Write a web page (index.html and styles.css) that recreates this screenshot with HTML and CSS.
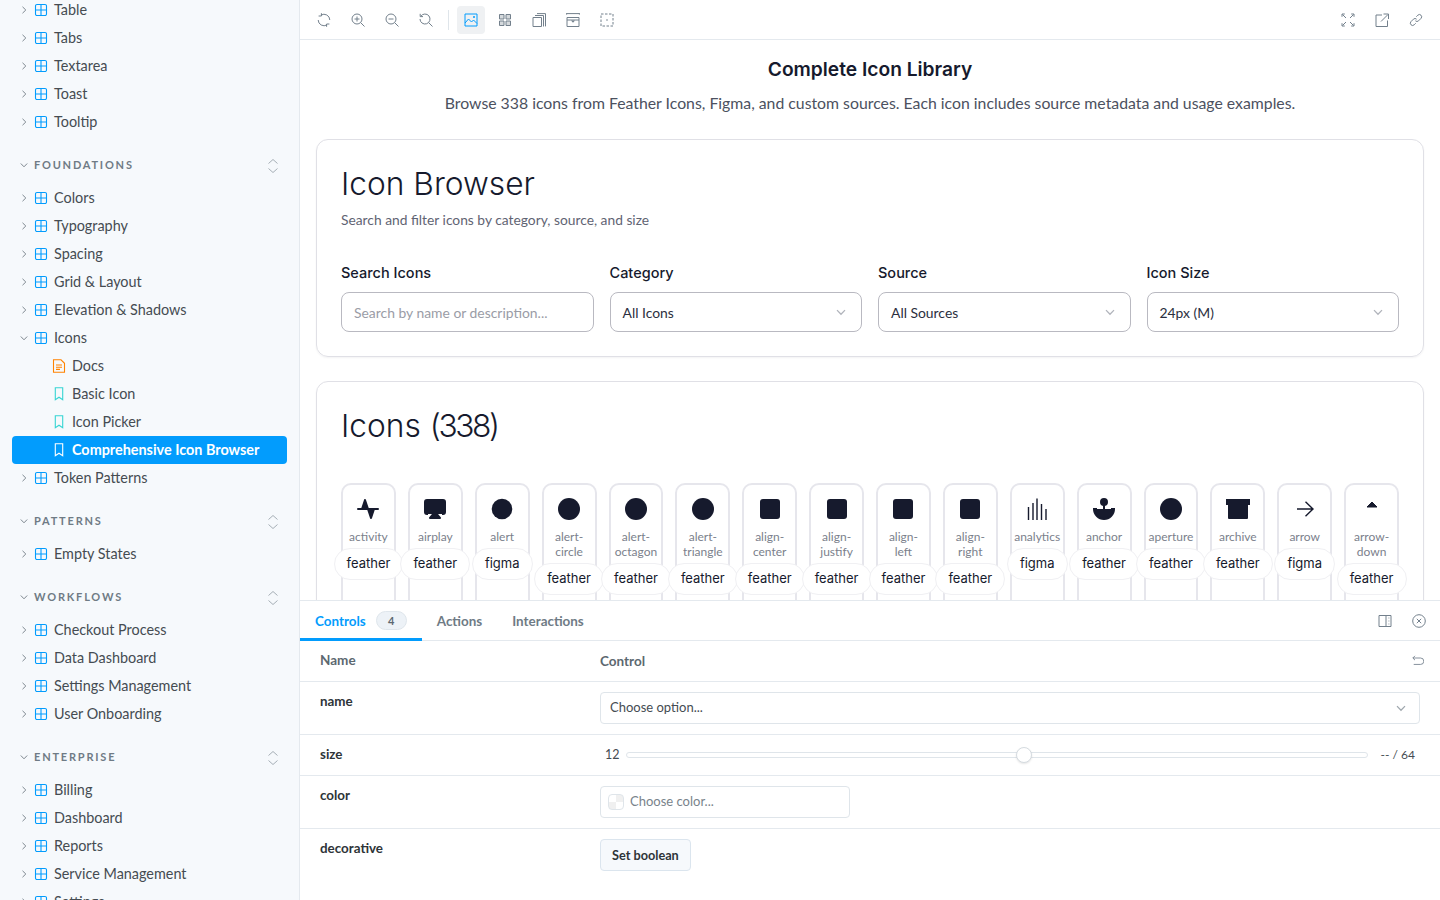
FILE: index.html
```html
<!doctype html>
<html>
  <head>
    <title>Icon Browser</title>
    <link rel="stylesheet" href="styles.css">
  </head>

  <body>
    <!-- Shared icons -->
    <svg class="sprite" xmlns="http://www.w3.org/2000/svg">
      <symbol id="chev-r" viewBox="0 0 8 8"><path d="M2.5 .8 5.8 4 2.5 7.2" fill="none" stroke="currentColor" stroke-width="1"/></symbol>
      <symbol id="chev-d" viewBox="0 0 8 8"><path d="M.8 2.5 4 5.8 7.2 2.5" fill="none" stroke="currentColor" stroke-width="1"/></symbol>
      <symbol id="comp" viewBox="0 0 14 14"><path d="M3 1.5h8A1.5 1.5 0 0 1 12.5 3v8a1.5 1.5 0 0 1-1.5 1.5H3A1.5 1.5 0 0 1 1.500 11V3A1.500 1.500 0 0 1 3 1.500ZM7 1.500v11M1.500 7h11" fill="none" stroke="currentColor" stroke-width="1.100"/></symbol>
      <symbol id="doc" viewBox="0 0 14 14"><path d="M1.500 .8h7.500l3.500 3.500v9h-11ZM4 6h6M4 8.200h6M4 10.400h4" fill="none" stroke="currentColor" stroke-width="1.100"/></symbol>
      <symbol id="mark" viewBox="0 0 14 14"><path d="M3.300 .8h7.400v12L7 10.200 3.300 12.800Z" fill="none" stroke="currentColor" stroke-width="1.100"/></symbol>
      <symbol id="updown" viewBox="0 0 12 16"><path d="M1.500 5.500 6 1.500l4.500 4M1.500 10.500l4.500 4 4.500-4" fill="none" stroke="currentColor" stroke-width="1"/></symbol>
      <symbol id="sync" viewBox="0 0 14 14"><path d="M12.800 7A5.800 5.800 0 0 0 4 2.100M1.200 7A5.800 5.800 0 0 0 10 11.900M4.400 .2v2.800H1.600M9.600 13.800v-2.800h2.800" fill="none" stroke="currentColor" stroke-width="1"/></symbol>
      <symbol id="zoomin" viewBox="0 0 14 14"><circle cx="6" cy="6" r="5" fill="none" stroke="currentColor"/><path d="M9.700 9.700 13.500 13.500M3.500 6h5M6 3.500v5" fill="none" stroke="currentColor"/></symbol>
      <symbol id="zoomout" viewBox="0 0 14 14"><circle cx="6" cy="6" r="5" fill="none" stroke="currentColor"/><path d="M9.700 9.700 13.500 13.500M3.500 6h5" fill="none" stroke="currentColor"/></symbol>
      <symbol id="zoomreset" viewBox="0 0 14 14"><path d="M1.800 3.300A5 5 0 1 1 1 6M1.200 .8v2.800h2.800M9.700 9.700 13.500 13.500" fill="none" stroke="currentColor"/></symbol>
      <symbol id="photo" viewBox="0 0 14 14"><path d="M1 1h12v12H1ZM1 10l3.500-4 3 3 2-2 3.500 3.500" fill="none" stroke="currentColor"/><circle cx="10" cy="4" r="1" fill="currentColor"/></symbol>
      <symbol id="grid" viewBox="0 0 14 14"><path d="M1.500 1.500h4.500v4.500H1.500ZM8 1.500h4.500v4.500H8ZM1.500 8h4.500v4.500H1.500ZM8 8h4.500v4.500H8Z" fill="currentColor" fill-opacity=".3" stroke="currentColor"/></symbol>
      <symbol id="layers" viewBox="0 0 14 14"><path d="M1 4.500h8.500v9H1ZM3 2.500h8.500v11M5 .6h8.500v12.800" fill="none" stroke="currentColor"/></symbol>
      <symbol id="ruler" viewBox="0 0 14 14"><path d="M.6 .6h12.800M.6 .1v1.500M13.400 .1v1.500M1 4.500h12v9H1ZM1 7h12" fill="none" stroke="currentColor"/><path d="M5 7.500h4L7 9.800Z" fill="currentColor"/></symbol>
      <symbol id="outline" viewBox="0 0 14 14"><path d="M1 1h12v12H1Z" fill="none" stroke="currentColor" stroke-dasharray="2.500 1.500"/><circle cx="7" cy="7" r=".8" fill="currentColor"/></symbol>
      <symbol id="expand" viewBox="0 0 14 14"><path d="M1 3.800V1h2.800M13 3.800V1h-2.800M1 10.200V13h2.800M13 10.200V13h-2.800M1.500 1.500l3.500 3.500M12.500 1.500 9 5M1.500 12.500 5 9M12.500 12.500 9 9" fill="none" stroke="currentColor"/></symbol>
      <symbol id="share" viewBox="0 0 14 14"><path d="M7 2H1v11.500h11.500V7.500M6 8.500 13 1.500M8.500 1h5v5" fill="none" stroke="currentColor"/></symbol>
      <symbol id="link" viewBox="0 0 14 14"><path d="M7.300 3.700 8.800 2.200a2.300 2.300 0 0 1 3.200 0 2.300 2.300 0 0 1 0 3.200L9.600 7.800a2.300 2.300 0 0 1-3.200 0M6.700 10.300 5.200 11.800a2.300 2.300 0 0 1-3.200 0 2.300 2.300 0 0 1 0-3.200L4.400 6.200a2.300 2.300 0 0 1 3.200 0" fill="none" stroke="currentColor"/></symbol>
      <symbol id="side" viewBox="0 0 14 14"><path d="M1 1.500h12v11H1ZM8 1.500v11M10.500 4h.800M10.500 7h.800M10.500 10h.800" fill="none" stroke="currentColor"/></symbol>
      <symbol id="close" viewBox="0 0 14 14"><circle cx="7" cy="7" r="6.300" fill="none" stroke="currentColor"/><path d="M4.800 4.800l4.400 4.400M9.200 4.800 4.800 9.200" fill="none" stroke="currentColor"/></symbol>
      <symbol id="undo" viewBox="0 0 14 14"><path d="M3.500 1 1 3.500 3.500 6M1 3.500h9a3 3 0 0 1 0 7.500H2" fill="none" stroke="currentColor"/></symbol>

      <symbol id="i-activity" viewBox="0 0 24 24"><polygon points="22,12 18,12 15,21 9,3 6,12 2,12" fill="currentColor" stroke="currentColor" stroke-width="2" stroke-linejoin="round"/></symbol>
      <symbol id="i-airplay" viewBox="0 0 24 24"><path d="M5 17H4a2 2 0 0 1-2-2V5a2 2 0 0 1 2-2h16a2 2 0 0 1 2 2v10a2 2 0 0 1-2 2h-1" fill="currentColor" stroke="currentColor" stroke-width="2"/><polygon points="12,15 17,21 7,21" fill="currentColor" stroke="currentColor" stroke-width="2" stroke-linejoin="round"/></symbol>
      <symbol id="i-circle" viewBox="0 0 24 24"><circle cx="12" cy="12" r="11" fill="currentColor"/></symbol>
      <symbol id="i-dot" viewBox="0 0 24 24"><circle cx="12" cy="12" r="10.300" fill="currentColor"/></symbol>
      <symbol id="i-square" viewBox="0 0 24 24"><rect x="2" y="2" width="20" height="20" rx="3" fill="currentColor"/></symbol>
      <symbol id="i-bars" viewBox="0 0 24 24"><path d="M3.500 23V10M8 23V6M12 23V1.500M16.500 23V7M21 23V12" fill="none" stroke="currentColor" stroke-width="1.400"/></symbol>
      <symbol id="i-anchor" viewBox="0 0 24 24"><circle cx="12" cy="5" r="3" fill="currentColor" stroke="currentColor" stroke-width="2"/><path d="M12 8v14" stroke="currentColor" stroke-width="2"/><path d="M5 12H2a10 10 0 0 0 20 0h-3" fill="currentColor" stroke="currentColor" stroke-width="2"/></symbol>
      <symbol id="i-archive" viewBox="0 0 24 24"><polygon points="21,8 21,21 3,21 3,8" fill="currentColor" stroke="currentColor" stroke-width="2" stroke-linejoin="round"/><rect x="0" y="2" width="24" height="6" fill="currentColor"/></symbol>
      <symbol id="i-arrow" viewBox="0 0 24 24"><path d="M4 12h15M12.500 4.800 20 12l-7.500 7.200" fill="none" stroke="currentColor" stroke-width="1.400"/></symbol>
      <symbol id="i-caret" viewBox="0 0 24 24"><polygon points="12,5 17,10 7,10" fill="currentColor" stroke="currentColor" stroke-width="1" stroke-linejoin="round"/></symbol>
    </svg>

    <div class="page">
      <!-- Sidebar -->
      <nav class="sidebar">
        <ul class="tree tree-first">
          <li class="row"><svg class="chev"><use href="#chev-r"/></svg><svg class="tree-icon"><use href="#comp"/></svg>Table</li>
          <li class="row"><svg class="chev"><use href="#chev-r"/></svg><svg class="tree-icon"><use href="#comp"/></svg>Tabs</li>
          <li class="row"><svg class="chev"><use href="#chev-r"/></svg><svg class="tree-icon"><use href="#comp"/></svg>Textarea</li>
          <li class="row"><svg class="chev"><use href="#chev-r"/></svg><svg class="tree-icon"><use href="#comp"/></svg>Toast</li>
          <li class="row"><svg class="chev"><use href="#chev-r"/></svg><svg class="tree-icon"><use href="#comp"/></svg>Tooltip</li>
        </ul>

        <div class="group"><svg class="chev"><use href="#chev-d"/></svg><span class="group-name">Foundations</span><svg class="updown"><use href="#updown"/></svg></div>
        <ul class="tree">
          <li class="row"><svg class="chev"><use href="#chev-r"/></svg><svg class="tree-icon"><use href="#comp"/></svg>Colors</li>
          <li class="row"><svg class="chev"><use href="#chev-r"/></svg><svg class="tree-icon"><use href="#comp"/></svg>Typography</li>
          <li class="row"><svg class="chev"><use href="#chev-r"/></svg><svg class="tree-icon"><use href="#comp"/></svg>Spacing</li>
          <li class="row"><svg class="chev"><use href="#chev-r"/></svg><svg class="tree-icon"><use href="#comp"/></svg>Grid &amp; Layout</li>
          <li class="row"><svg class="chev"><use href="#chev-r"/></svg><svg class="tree-icon"><use href="#comp"/></svg>Elevation &amp; Shadows</li>
          <li class="row"><svg class="chev"><use href="#chev-d"/></svg><svg class="tree-icon"><use href="#comp"/></svg>Icons</li>
          <li class="row child"><svg class="tree-icon doc"><use href="#doc"/></svg>Docs</li>
          <li class="row child"><svg class="tree-icon story"><use href="#mark"/></svg>Basic Icon</li>
          <li class="row child"><svg class="tree-icon story"><use href="#mark"/></svg>Icon Picker</li>
          <li class="row child selected"><svg class="tree-icon"><use href="#mark"/></svg>Comprehensive Icon Browser</li>
          <li class="row"><svg class="chev"><use href="#chev-r"/></svg><svg class="tree-icon"><use href="#comp"/></svg>Token Patterns</li>
        </ul>

        <div class="group"><svg class="chev"><use href="#chev-d"/></svg><span class="group-name">Patterns</span><svg class="updown"><use href="#updown"/></svg></div>
        <ul class="tree">
          <li class="row"><svg class="chev"><use href="#chev-r"/></svg><svg class="tree-icon"><use href="#comp"/></svg>Empty States</li>
        </ul>

        <div class="group"><svg class="chev"><use href="#chev-d"/></svg><span class="group-name">Workflows</span><svg class="updown"><use href="#updown"/></svg></div>
        <ul class="tree">
          <li class="row"><svg class="chev"><use href="#chev-r"/></svg><svg class="tree-icon"><use href="#comp"/></svg>Checkout Process</li>
          <li class="row"><svg class="chev"><use href="#chev-r"/></svg><svg class="tree-icon"><use href="#comp"/></svg>Data Dashboard</li>
          <li class="row"><svg class="chev"><use href="#chev-r"/></svg><svg class="tree-icon"><use href="#comp"/></svg>Settings Management</li>
          <li class="row"><svg class="chev"><use href="#chev-r"/></svg><svg class="tree-icon"><use href="#comp"/></svg>User Onboarding</li>
        </ul>

        <div class="group"><svg class="chev"><use href="#chev-d"/></svg><span class="group-name">Enterprise</span><svg class="updown"><use href="#updown"/></svg></div>
        <ul class="tree">
          <li class="row"><svg class="chev"><use href="#chev-r"/></svg><svg class="tree-icon"><use href="#comp"/></svg>Billing</li>
          <li class="row"><svg class="chev"><use href="#chev-r"/></svg><svg class="tree-icon"><use href="#comp"/></svg>Dashboard</li>
          <li class="row"><svg class="chev"><use href="#chev-r"/></svg><svg class="tree-icon"><use href="#comp"/></svg>Reports</li>
          <li class="row"><svg class="chev"><use href="#chev-r"/></svg><svg class="tree-icon"><use href="#comp"/></svg>Service Management</li>
          <li class="row"><svg class="chev"><use href="#chev-r"/></svg><svg class="tree-icon"><use href="#comp"/></svg>Settings</li>
        </ul>
      </nav>

      <main class="main">
        <!-- Toolbar -->
        <header class="toolbar">
          <button class="tool"><svg><use href="#sync"/></svg></button>
          <button class="tool"><svg><use href="#zoomin"/></svg></button>
          <button class="tool"><svg><use href="#zoomout"/></svg></button>
          <button class="tool"><svg><use href="#zoomreset"/></svg></button>
          <span class="tool-sep"></span>
          <button class="tool active"><svg><use href="#photo"/></svg></button>
          <button class="tool"><svg><use href="#grid"/></svg></button>
          <button class="tool"><svg><use href="#layers"/></svg></button>
          <button class="tool"><svg><use href="#ruler"/></svg></button>
          <button class="tool"><svg><use href="#outline"/></svg></button>
          <span class="tool-space"></span>
          <button class="tool"><svg><use href="#expand"/></svg></button>
          <button class="tool"><svg><use href="#share"/></svg></button>
          <button class="tool"><svg><use href="#link"/></svg></button>
        </header>

        <!-- Story canvas -->
        <div class="canvas">
          <h1 class="page-title">Complete Icon Library</h1>
          <p class="page-desc">Browse 338 icons from Feather Icons, Figma, and custom sources. Each icon includes source metadata and usage examples.</p>

          <section class="card">
            <h2 class="card-title">Icon Browser</h2>
            <p class="card-sub">Search and filter icons by category, source, and size</p>
            <div class="filters">
              <div class="field">
                <label class="field-label">Search Icons</label>
                <input class="field-box" type="text" placeholder="Search by name or description...">
              </div>
              <div class="field">
                <label class="field-label">Category</label>
                <div class="field-box">All Icons<svg class="field-chev"><use href="#chev-d"/></svg></div>
              </div>
              <div class="field">
                <label class="field-label">Source</label>
                <div class="field-box">All Sources<svg class="field-chev"><use href="#chev-d"/></svg></div>
              </div>
              <div class="field">
                <label class="field-label">Icon Size</label>
                <div class="field-box">24px (M)<svg class="field-chev"><use href="#chev-d"/></svg></div>
              </div>
            </div>
          </section>

          <section class="card">
            <h2 class="card-title">Icons <span class="card-count">(338)</span></h2>
            <div class="icon-grid">
              <div class="icon-item"><svg class="glyph"><use href="#i-activity"/></svg><span class="icon-name">activity</span><span class="source">feather</span></div>
              <div class="icon-item"><svg class="glyph"><use href="#i-airplay"/></svg><span class="icon-name">airplay</span><span class="source">feather</span></div>
              <div class="icon-item"><svg class="glyph"><use href="#i-dot"/></svg><span class="icon-name">alert</span><span class="source">figma</span></div>
              <div class="icon-item"><svg class="glyph"><use href="#i-circle"/></svg><span class="icon-name">alert-circle</span><span class="source">feather</span></div>
              <div class="icon-item"><svg class="glyph"><use href="#i-circle"/></svg><span class="icon-name">alert-octagon</span><span class="source">feather</span></div>
              <div class="icon-item"><svg class="glyph"><use href="#i-circle"/></svg><span class="icon-name">alert-triangle</span><span class="source">feather</span></div>
              <div class="icon-item"><svg class="glyph"><use href="#i-square"/></svg><span class="icon-name">align-center</span><span class="source">feather</span></div>
              <div class="icon-item"><svg class="glyph"><use href="#i-square"/></svg><span class="icon-name">align-justify</span><span class="source">feather</span></div>
              <div class="icon-item"><svg class="glyph"><use href="#i-square"/></svg><span class="icon-name">align-left</span><span class="source">feather</span></div>
              <div class="icon-item"><svg class="glyph"><use href="#i-square"/></svg><span class="icon-name">align-right</span><span class="source">feather</span></div>
              <div class="icon-item"><svg class="glyph"><use href="#i-bars"/></svg><span class="icon-name">analytics</span><span class="source">figma</span></div>
              <div class="icon-item"><svg class="glyph"><use href="#i-anchor"/></svg><span class="icon-name">anchor</span><span class="source">feather</span></div>
              <div class="icon-item"><svg class="glyph"><use href="#i-circle"/></svg><span class="icon-name">aperture</span><span class="source">feather</span></div>
              <div class="icon-item"><svg class="glyph"><use href="#i-archive"/></svg><span class="icon-name">archive</span><span class="source">feather</span></div>
              <div class="icon-item"><svg class="glyph"><use href="#i-arrow"/></svg><span class="icon-name">arrow</span><span class="source">figma</span></div>
              <div class="icon-item"><svg class="glyph"><use href="#i-caret"/></svg><span class="icon-name">arrow-down</span><span class="source">feather</span></div>
            </div>
          </section>
        </div>

        <!-- Addons panel -->
        <div class="panel">
          <div class="tabs">
            <a class="tab current">Controls<span class="tab-count">4</span></a>
            <a class="tab">Actions</a>
            <a class="tab">Interactions</a>
            <span class="tool-space"></span>
            <svg class="panel-icon"><use href="#side"/></svg>
            <svg class="panel-icon"><use href="#close"/></svg>
          </div>

          <div class="ctl-row ctl-head">
            <span>Name</span>
            <span class="ctl-head-right">Control<svg class="panel-icon"><use href="#undo"/></svg></span>
          </div>
          <div class="ctl-row">
            <span class="ctl-name">name</span>
            <div class="ctl-box ctl-select">Choose option...<svg class="ctl-chev"><use href="#chev-d"/></svg></div>
          </div>
          <div class="ctl-row">
            <span class="ctl-name">size</span>
            <div class="range">
              <span>12</span>
              <input class="range-input" type="range" min="12" max="64" step="0.1" value="40">
              <span class="range-max">-- / 64</span>
            </div>
          </div>
          <div class="ctl-row">
            <span class="ctl-name">color</span>
            <div class="ctl-box ctl-color"><span class="swatch"></span>Choose color...</div>
          </div>
          <div class="ctl-row ctl-last">
            <span class="ctl-name">decorative</span>
            <div><button class="bool-btn">Set boolean</button></div>
          </div>
        </div>
      </main>
    </div>
  </body>
</html>
```

FILE: styles.css
```css
* {
  box-sizing: border-box;
}

html, body {
  margin: 0;
  height: 100%;
  overflow: hidden;
}

body {
  font-family: "Lato", "Open Sans", sans-serif;
  font-size: 14px;
  color: #2e3438;
  background: #fff;
}

.sprite {
  display: none;
}

.page {
  display: flex;
  height: 900px;
}

/* Sidebar */
.sidebar {
  width: 300px;
  flex: none;
  overflow: hidden;
  background: #f6f9fc;
  border-right: 1px solid #e4e9ee;
}

.tree {
  list-style: none;
  margin: 0;
  padding: 0 12px;
}

.tree-first {
  margin-top: -4px;
}

.row {
  display: flex;
  align-items: center;
  height: 28px;
  padding: 0 0 2px 8px;
  font-size: 14.400px;
  color: #454c52;
  border-radius: 4px;
}

.chev {
  width: 8px;
  height: 8px;
  flex: none;
  margin: 2px 6px 0 0;
  color: #7d878f;
}

.tree-icon {
  width: 14px;
  height: 14px;
  flex: none;
  margin: 2px 6px 0 0;
  color: #029cfd;
}

.row.child {
  padding-left: 40px;
}

.tree-icon.doc {
  color: #ff8300;
}

.tree-icon.story {
  color: #37d5d3;
}

.row.selected {
  background: #029cfd;
  color: #fff;
  font-weight: 700;
}

.row.selected .tree-icon {
  color: #fff;
}

.group {
  display: flex;
  align-items: center;
  height: 18px;
  margin: 20px 0 10px;
  padding: 0 20px 2px 20px;
}

.group-name {
  flex: 1;
  font-size: 11px;
  font-weight: 700;
  letter-spacing: 1.800px;
  text-transform: uppercase;
  color: #6f7b85;
}

.updown {
  width: 12px;
  height: 16px;
  margin-top: 4px;
  color: #a6afb6;
}

/* Main column */
.main {
  flex: 1;
  min-width: 0;
  display: flex;
  flex-direction: column;
}

.toolbar {
  display: flex;
  align-items: center;
  gap: 6px;
  height: 40px;
  flex: none;
  padding: 0 10px;
  border-bottom: 1px solid #e4e9ee;
}

.tool {
  display: flex;
  align-items: center;
  justify-content: center;
  width: 28px;
  height: 28px;
  padding: 0;
  border: 0;
  border-radius: 4px;
  background: none;
  color: #73808c;
}

.tool svg {
  width: 14px;
  height: 14px;
}

.tool.active {
  background: #eff1f3;
  color: #029cfd;
}

.tool-sep {
  width: 1px;
  height: 20px;
  margin: 0 2px;
  background: #dfe5ea;
}

.tool-space {
  flex: 1;
}

/* Story canvas */
.canvas {
  flex: 1;
  min-height: 0;
  overflow: hidden;
  padding: 15px 16px 0;
  color: #161a2d;
}

.page-title {
  margin: 0;
  font-family: "Inter", sans-serif;
  font-size: 19.200px;
  line-height: 28px;
  font-weight: 600;
  text-align: center;
}

.page-desc {
  margin: 8px 0 24px;
  font-size: 15.800px;
  line-height: 24px;
  text-align: center;
  color: #4c5160;
}

.card {
  margin-bottom: 24px;
  padding: 24px 24px 24px;
  border: 1px solid #e0e0e6;
  border-radius: 12px;
  box-shadow: 0 1px 2px rgba(22, 26, 45, .05);
}

.card-title {
  margin: 0;
  font-family: "Inter", sans-serif;
  font-size: 31.700px;
  line-height: 40px;
  font-weight: 300;
}

.card-count {
  letter-spacing: -.075em;
}

.card-sub {
  margin: 6px 0 0;
  font-size: 13.800px;
  line-height: 20px;
  color: #5f6473;
}

.filters {
  display: grid;
  grid-template-columns: repeat(4, 1fr);
  gap: 16px;
  margin-top: 33px;
}

.field-label {
  display: block;
  margin-bottom: 9px;
  font-family: "Inter", sans-serif;
  font-size: 14.500px;
  line-height: 20px;
  font-weight: 500;
}

.field-box {
  display: flex;
  align-items: center;
  justify-content: space-between;
  width: 100%;
  height: 40px;
  padding: 0 12px;
  font: inherit;
  font-size: 13.900px;
  color: #2b2f40;
  background: #fff;
  border: 1px solid #b9b9c1;
  border-radius: 8px;
}

.field-box::placeholder {
  color: #9a9ca6;
  opacity: 1;
}

.field-chev {
  width: 10px;
  height: 10px;
  margin-right: 3px;
  color: #b0b3bb;
}

.icon-grid {
  display: grid;
  grid-template-columns: repeat(16, 1fr);
  gap: 12px;
  margin-top: 37px;
}

.icon-item {
  display: flex;
  flex-direction: column;
  align-items: center;
  min-width: 0;
  min-height: 150px;
  padding: 12px 4px;
  border: 2px solid #e6e6ec;
  border-radius: 10px;
}

.glyph {
  width: 24px;
  height: 24px;
  flex: none;
  color: #161a2d;
}

.icon-name {
  margin-top: 8px;
  font-size: 12px;
  line-height: 15px;
  text-align: center;
  color: #7b7f8c;
}

.source {
  flex: none;
  margin-top: 4px;
  padding: 5px 12px 7px;
  font-family: "Inter", sans-serif;
  font-size: 13px;
  line-height: 18px;
  border: 1px solid #f0f0f3;
  border-radius: 999px;
  background: #fff;
  color: #161a2d;
}

/* Addons panel */
.panel {
  height: 300px;
  flex: none;
  background: #fff;
  border-top: 1px solid #e4e9ee;
  overflow: hidden;
}

.tabs {
  display: flex;
  align-items: center;
  height: 40px;
  padding-right: 14px;
  border-bottom: 1px solid #e4e9ee;
}

.tab {
  display: flex;
  align-items: center;
  height: 40px;
  padding: 0 15px;
  font-size: 13.450px;
  font-weight: 700;
  color: #6f7b85;
}

.tab.current {
  color: #029cfd;
  box-shadow: inset 0 -3px 0 #029cfd;
}

.tab-count {
  width: 31px;
  height: 19px;
  margin-left: 10px;
  font-size: 11px;
  line-height: 17px;
  text-align: center;
  color: #5c6870;
  background: #edf2f7;
  border: 1px solid #dfe6ec;
  border-radius: 10px;
}

.panel-icon {
  width: 14px;
  height: 14px;
  margin-left: 20px;
  color: #73808c;
}

.ctl-row {
  display: grid;
  grid-template-columns: 280px 1fr;
  padding: 10px 20px;
  line-height: 20px;
  border-bottom: 1px solid #e4e9ee;
}

.ctl-last {
  border-bottom: 0;
}

.ctl-head {
  min-height: 41px;
  padding-top: 9px;
  font-weight: 700;
  font-size: 13.500px;
  color: #5c6870;
}

.ctl-head-right {
  display: flex;
  align-items: center;
  justify-content: space-between;
}

.ctl-head-right .panel-icon {
  width: 12px;
  height: 12px;
  margin-right: -4px;
}

.ctl-name {
  margin-top: -1px;
  font-weight: 700;
  font-size: 13.400px;
}

.ctl-box {
  display: flex;
  align-items: center;
  height: 32px;
  padding: 0 9px 2px;
  font-size: 13px;
  background: #fff;
  border: 1px solid #dfe5ea;
  border-radius: 4px;
}

.ctl-select {
  justify-content: space-between;
  color: #454c52;
}

.ctl-chev {
  width: 10px;
  height: 10px;
  margin: 2px 4px 0 0;
  color: #a0a8ae;
}

.ctl-color {
  width: 250px;
  padding-left: 7px;
  color: #79838b;
}

.swatch {
  width: 16px;
  height: 16px;
  margin: 2px 6px 0 0;
  border: 1px solid #dfe5ea;
  border-radius: 4px;
  background: conic-gradient(#f0f0f0 25%, #fff 0 50%, #f0f0f0 0 75%, #fff 0);
}

.range {
  display: flex;
  align-items: center;
  gap: 6px;
  padding: 0 5px;
  font-size: 12.500px;
  color: #454c52;
}

.range-max {
  font-size: 12px;
}

.range-input {
  flex: 1;
  min-width: 0;
  height: 16px;
  margin: 0 7px 0 0;
  appearance: none;
  background: none;
}

.range-input::-webkit-slider-runnable-track {
  height: 6px;
  background: #fff;
  border: 1px solid #dfe5ea;
  border-radius: 3px;
}

.range-input::-webkit-slider-thumb {
  appearance: none;
  width: 16px;
  height: 16px;
  margin-top: -6px;
  background: #fff;
  border: 1px solid #d5dbe0;
  border-radius: 50%;
  box-shadow: 0 1px 2px rgba(0, 0, 0, .1);
}

.bool-btn {
  height: 32px;
  padding: 0 11px;
  font: inherit;
  font-size: 12.700px;
  font-weight: 700;
  color: #2e3438;
  background: #f6f9fc;
  border: 1px solid #dbe5ee;
  border-radius: 4px;
}
```
